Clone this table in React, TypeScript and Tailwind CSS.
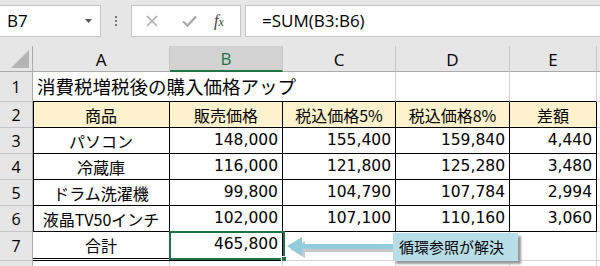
import React from 'react';

const jp = "font-['Noto_Sans_CJK_JP',sans-serif]";
const num = "font-['DejaVu_Sans','Noto_Sans_CJK_JP',sans-serif]";
const ui = "font-['Open_Sans','Noto_Sans',sans-serif]";

type Row = { name: string; vals: string[] };

const rows: Row[] = [
  { name: 'パソコン', vals: ['148,000', '155,400', '159,840', '4,440'] },
  { name: '冷蔵庫', vals: ['116,000', '121,800', '125,280', '3,480'] },
  { name: 'ドラム洗濯機', vals: ['99,800', '104,790', '107,784', '2,994'] },
  { name: '液晶TV50インチ', vals: ['102,000', '107,100', '110,160', '3,060'] },
];

const widths = ['w-[113px]', 'w-[113px]', 'w-[114px]', 'w-[87px]'];

function RowHead({ n, active }: { n: number; active?: boolean }) {
  return (
    <div
      className={`flex w-[33px] shrink-0 items-center justify-center border-b border-[#c6c6c6] text-[16px] ${ui} ${
        active
          ? 'border-r-2 border-r-[#217346] bg-[#d2d2d2] text-[#217346]'
          : 'border-r border-r-[#ababab] bg-[#e6e6e6] text-black'
      }`}
    >
      {n}
    </div>
  );
}

function Toolbar() {
  return (
    <div className="flex h-[46px] items-start bg-[#e6e6e6] pt-[5px]">
      <div className="flex h-[32px] w-[101px] items-center justify-between border border-l-0 border-[#c6c6c6] bg-white pl-[7px] pr-[8px]">
        <span className={`text-[17px] text-black ${ui}`}>B7</span>
        <svg width="7" height="4" viewBox="0 0 7 4">
          <path d="M0 0h7L3.5 4z" fill="#555" />
        </svg>
      </div>
      <div className="flex h-[32px] w-[30px] flex-col items-center justify-center gap-[2px]">
        <span className="h-[2px] w-[2px] bg-[#777]" />
        <span className="h-[2px] w-[2px] bg-[#777]" />
        <span className="h-[2px] w-[2px] bg-[#777]" />
      </div>
      <div className="flex h-[32px] w-[110px] items-center border border-[#c6c6c6] bg-white">
        <svg className="ml-[14px]" width="12" height="12" viewBox="0 0 12 12">
          <path d="M1 1l10 10M11 1L1 11" stroke="#a6a6a6" strokeWidth="1.4" />
        </svg>
        <svg className="ml-[24px]" width="15" height="12" viewBox="0 0 15 12">
          <path d="M1 6.5l4.5 4L14 1.5" stroke="#a6a6a6" strokeWidth="2.2" fill="none" />
        </svg>
        <span className="ml-[17px] font-['Liberation_Serif',serif] text-[16px] italic text-[#444]">
          f<span className="text-[12px]">x</span>
        </span>
      </div>
      <div className="ml-[4px] flex h-[32px] flex-1 items-center border border-r-0 border-[#c6c6c6] bg-white pl-[16px]">
        <span className={`text-[17px] text-black ${ui}`}>=SUM(B3:B6)</span>
      </div>
    </div>
  );
}

function ColHeads() {
  const cols = [
    { l: 'A', w: 'w-[137px]' },
    { l: 'B', w: 'w-[113px]', active: true },
    { l: 'C', w: 'w-[113px]' },
    { l: 'D', w: 'w-[114px]' },
    { l: 'E', w: 'w-[87px]' },
  ];
  return (
    <div className="flex h-[26px] bg-[#e6e6e6]">
      <div className="relative w-[33px] shrink-0 border-r border-b border-[#ababab]">
        <svg className="absolute right-[3px] bottom-[3px]" width="18" height="18" viewBox="0 0 18 18">
          <path d="M18 0v18H0z" fill="#b4b4b4" />
        </svg>
      </div>
      {cols.map((c) => (
        <div
          key={c.l}
          className={`${c.w} flex shrink-0 items-center justify-center pt-[2px] text-[17px] ${ui} ${
            c.active
              ? 'border-b-2 border-b-[#217346] bg-[#d2d2d2] text-[#217346]'
              : 'border-b border-b-[#ababab] text-black'
          } border-r border-r-[#c6c6c6]`}
        >
          {c.l}
        </div>
      ))}
      <div className="flex-1 border-b border-[#ababab]" />
    </div>
  );
}

export default function App() {
  return (
    <div className="relative h-[266px] w-[600px] overflow-hidden bg-white">
      <Toolbar />
      <ColHeads />

      {/* row 1 */}
      <div className="flex h-[30px]">
        <RowHead n={1} />
        <div
          className={`flex w-[363px] shrink-0 items-center border-b border-black pl-[4px] text-[18.5px] text-black ${jp} border-r border-r-[#d4d4d4] whitespace-nowrap`}
        >
          消費税増税後の購入価格アップ
        </div>
        <div className="w-[114px] shrink-0 border-r border-b border-[#d4d4d4] border-b-black" />
        <div className="w-[87px] shrink-0 border-r border-b border-[#d4d4d4] border-b-black" />
        <div className="flex-1 border-b border-[#d4d4d4]" />
      </div>

      {/* row 2 */}
      <div className="flex h-[26px]">
        <RowHead n={2} />
        {['商品', '販売価格', '税込価格5%', '税込価格8%', '差額'].map((t, i) => (
          <div
            key={t}
            className={`${i === 0 ? 'w-[137px] shadow-[inset_1px_0_0_#000]' : widths[i - 1]} flex shrink-0 items-center justify-center border-r border-b border-black bg-[#fff2cc] text-[16px] text-black ${jp}`}
          >
            {t}
          </div>
        ))}
        <div className="flex-1 border-b border-[#d4d4d4]" />
      </div>

      {rows.map((r, idx) => (
        <div key={r.name} className="flex h-[26px]">
          <RowHead n={idx + 3} />
          <div
            className={`flex w-[137px] shrink-0 items-center justify-center border-r border-b border-black text-[16px] text-black shadow-[inset_1px_0_0_#000] ${jp}`}
          >
            {r.name}
          </div>
          {r.vals.map((v, i) => (
            <div
              key={i}
              className={`${widths[i]} flex shrink-0 items-center justify-end border-r border-b border-black pr-[4px] text-[15.5px] text-black ${num}`}
            >
              {v}
            </div>
          ))}
          <div className="flex-1 border-b border-[#d4d4d4]" />
        </div>
      ))}

      {/* row 7 */}
      <div className="flex h-[29px]">
        <RowHead n={7} />
        <div
          className={`flex h-[29px] w-[137px] shrink-0 items-center justify-center border-r border-b-[3px] border-double border-black pb-[1px] text-[16px] text-black ${jp}`}
        >
          合計
        </div>
        <div
          className={`flex h-[29px] w-[113px] shrink-0 items-center justify-end border-r border-b-[3px] border-double border-black pr-[4px] pb-[1px] text-[15.5px] text-black ${num}`}
        >
          465,800
        </div>
        <div className="w-[113px] shrink-0 border-r border-b border-[#d4d4d4]" />
        <div className="w-[114px] shrink-0 border-r border-b border-[#d4d4d4]" />
        <div className="w-[87px] shrink-0 border-r border-b border-[#d4d4d4]" />
        <div className="flex-1 border-b border-[#d4d4d4]" />
      </div>

      {/* row 8 */}
      <div className="flex h-[26px]">
        <RowHead n={8} />
        <div className="w-[137px] shrink-0 border-r border-[#d4d4d4]" />
        <div className="w-[113px] shrink-0 border-r border-[#d4d4d4]" />
        <div className="w-[113px] shrink-0 border-r border-[#d4d4d4]" />
        <div className="w-[114px] shrink-0 border-r border-[#d4d4d4]" />
        <div className="w-[87px] shrink-0 border-r border-[#d4d4d4]" />
      </div>

      {/* selection B7 */}
      <div className="pointer-events-none absolute top-[231px] left-[169px] h-[29px] w-[116px] border-2 border-[#217346]">
        <div className="absolute -right-[4px] -bottom-[4px] h-[6px] w-[6px] border border-white bg-[#217346]" />
      </div>

      {/* arrow */}
      <svg className="absolute top-[234px] left-[284px]" width="112" height="26" viewBox="0 0 112 26">
        <path d="M4 13l15-8v6h92v5H19v6z" fill="#c8c8c8" transform="translate(2 2)" />
        <path d="M3 12l15-9v7h92v5H18v7z" fill="#92cddc" />
      </svg>

      {/* callout */}
      <div
        className={`absolute top-[233px] left-[393px] flex h-[28px] w-[125px] items-center bg-[#b7dde8] pl-[6px] text-[15px] text-black shadow-[3px_3px_2px_#9a9a9a] ${jp}`}
      >
        循環参照が解決
      </div>
    </div>
  );
}
